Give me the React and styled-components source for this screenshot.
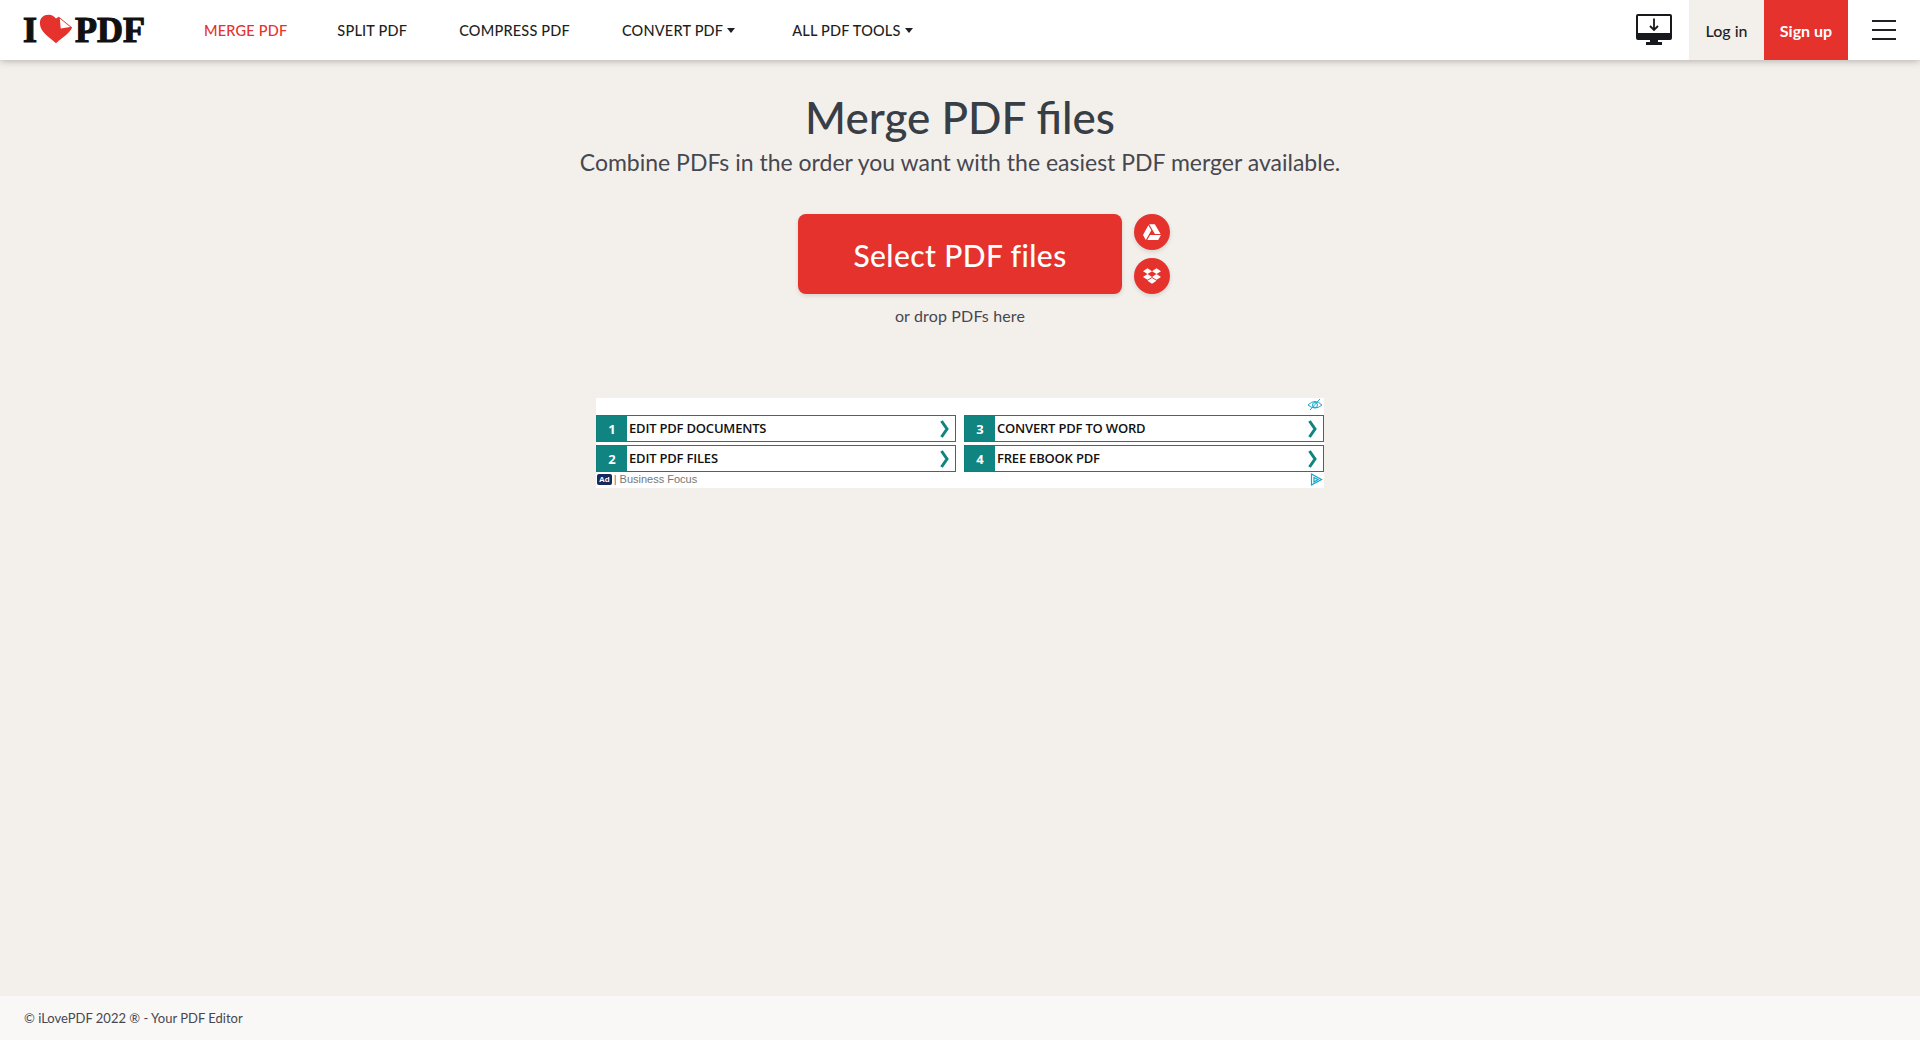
import styled, { createGlobalStyle } from "styled-components";
import { FaGoogleDrive, FaDropbox } from "react-icons/fa";

const Global = createGlobalStyle`
  * { box-sizing: border-box; }
  html, body { margin: 0; height: 100%; }
  body { background: #f3f0ec; font-family: Lato, "Open Sans", sans-serif; color: #383e45; }
`;

const Page = styled.div`
  height: 1040px;
  display: flex;
  flex-direction: column;
  overflow: hidden;
`;

const Head = styled.header`
  height: 60px;
  flex: none;
  background: #fff;
  display: flex;
  align-items: stretch;
  box-shadow: 0 0 8px rgba(0, 0, 0, 0.35);
  z-index: 5;
`;

const Logo = styled.a`
  display: flex;
  align-items: center;
  padding-left: 23px;
  width: 178px;
  font-family: "Liberation Serif", serif;
  font-weight: 700;
  font-size: 36px;
  line-height: 1;
  color: #111;
  -webkit-text-stroke: 1.2px #111;
`;

const Heart = styled.svg`
  width: 36px;
  height: 32px;
  margin: 0 1px 3px 1px;
  flex: none;
`;

const Nav = styled.nav`
  display: flex;
  align-items: center;
  flex: 1;
`;

const NavItem = styled.a`
  display: flex;
  align-items: center;
  gap: 4px;
  font-size: 14.5px;
  font-weight: 500;
  letter-spacing: 0.2px;
  padding: 0 26px;
  margin-right: ${(p) => p.$extra || 0}px;
  color: ${(p) => (p.$active ? "#e5322d" : "#1f1f24")};
  white-space: nowrap;
`;

const Caret = styled.span`
  width: 0;
  height: 0;
  border-left: 4.5px solid transparent;
  border-right: 4.5px solid transparent;
  border-top: 5px solid #1f1f24;
`;

const Tools = styled.div`
  display: flex;
  align-items: stretch;
`;

const Desktop = styled.svg`
  width: 36px;
  height: 32px;
  align-self: center;
  margin-right: 17px;
`;

const Login = styled.a`
  width: 75px;
  background: #f3f0ec;
  display: flex;
  align-items: center;
  justify-content: center;
  font-size: 16px;
  font-weight: 500;
  color: #1f1f24;
`;

const Signup = styled(Login)`
  width: 84px;
  background: #e5322d;
  color: #fff;
  font-weight: 700;
`;

const Burger = styled.a`
  width: 72px;
  display: flex;
  flex-direction: column;
  align-items: center;
  justify-content: center;
  gap: 7px;

  span {
    width: 24px;
    height: 2px;
    background: #1f1f24;
  }
`;

const Main = styled.main`
  flex: 1;
  display: flex;
  flex-direction: column;
  align-items: center;
  padding-top: 29px;
`;

const Title = styled.h1`
  margin: 0;
  font-size: 44px;
  line-height: 56px;
  font-weight: 500;
  color: #383e45;
`;

const Subtitle = styled.h2`
  margin: 1px 0 0;
  font-size: 23px;
  line-height: 32px;
  font-weight: 400;
  color: #47474f;
`;

const Uploader = styled.div`
  display: grid;
  grid-template-columns: 1fr 324px 1fr;
  column-gap: 12px;
  width: 100%;
  margin-top: 36px;
`;

const SelectButton = styled.a`
  grid-column: 2;
  height: 80px;
  padding-top: 2px;
  border-radius: 8px;
  background: #e5322d;
  color: #fff;
  font-size: 30px;
  font-weight: 500;
  letter-spacing: 0.4px;
  display: flex;
  align-items: center;
  justify-content: center;
  box-shadow: 0 2px 4px rgba(0, 0, 0, 0.12);
`;

const Clouds = styled.div`
  display: flex;
  flex-direction: column;
  gap: 8px;
`;

const Cloud = styled.a`
  width: 36px;
  height: 36px;
  border-radius: 50%;
  background: #e5322d;
  color: #fff;
  display: flex;
  align-items: center;
  justify-content: center;
  font-size: 18px;
  box-shadow: 0 2px 4px rgba(0, 0, 0, 0.12);
`;

const DropHint = styled.p`
  margin: 12px 0 0;
  font-size: 16px;
  line-height: 20px;
  letter-spacing: 0.15px;
  color: #47474f;
`;

const Ad = styled.div`
  width: 728px;
  height: 90px;
  margin-top: 72px;
  background: #fff;
  display: flex;
  flex-direction: column;
  font-family: "Open Sans", sans-serif;
`;

const AdTop = styled.div`
  height: 17px;
  display: flex;
  justify-content: flex-end;
  align-items: flex-start;
  padding-right: 1px;
`;

const AdGrid = styled.div`
  display: grid;
  grid-template-columns: 360px 360px;
  grid-auto-rows: 27px;
  column-gap: 8px;
  row-gap: 3px;
`;

const AdRow = styled.a`
  display: flex;
  align-items: center;
  border: 1px solid #0f7f7b;
`;

const AdNum = styled.span`
  width: 30px;
  align-self: stretch;
  background: #0f8480;
  color: #fff;
  font-size: 13px;
  font-weight: 700;
  display: flex;
  align-items: center;
  justify-content: center;
`;

const AdLabel = styled.span`
  flex: 1;
  padding: 0 0 1px 2px;
  font-size: 13px;
  font-weight: 600;
  letter-spacing: -0.2px;
  color: #111;
`;

const Chevron = styled.svg`
  width: 11px;
  height: 18px;
  margin-right: 5px;
`;

const AdFoot = styled.div`
  flex: 1;
  display: flex;
  align-items: center;
  padding: 0 1px 2px;
  font-family: "Liberation Sans", sans-serif;
  font-size: 11px;
  color: #777;
`;

const AdBadge = styled.span`
  background: #16295e;
  color: #fff;
  font-size: 8px;
  font-weight: 700;
  line-height: 11px;
  padding: 0 2px;
  border-radius: 2px;
  margin-right: 2px;
`;

const AdSource = styled.span`
  flex: 1;
`;

const Foot = styled.footer`
  height: 44px;
  flex: none;
  background: #f9f8f6;
  display: flex;
  align-items: center;
  padding-left: 24px;
  font-size: 13px;
  color: #47474f;
`;

const HeartLogo = () => (
  <Heart viewBox="0 0 38 32">
    <path d="M19 31 C12 25 2 19 2 10 C2 4 6 1 11 1 C15 1 17.500 3 19 5 L22 3 L36 14.500 C34 20 26 25 19 31 Z" fill="#e5322d" />
    <path d="M23 5 L34 14 L24 15.500 Z" fill="#fff" />
  </Heart>
);

const DesktopIcon = () => (
  <Desktop viewBox="0 0 36 32">
    <path d="M2 0 H34 A2 2 0 0 1 36 2 V24 A2 2 0 0 1 34 26 H22 V28 H26 V31 H10 V28 H14 V26 H2 A2 2 0 0 1 0 24 V2 A2 2 0 0 1 2 0 Z" fill="#17191c" />
    <rect x="2" y="2" width="32" height="17" fill="#fff" />
    <path d="M18 4.500 V16 M14 12 L18 16 L22 12" fill="none" stroke="#17191c" strokeWidth="1.800" />
  </Desktop>
);

const ChevronIcon = () => (
  <Chevron viewBox="0 0 11 18">
    <path d="M2.500 1 L8 9 L2.500 17" fill="none" stroke="#0f8480" strokeWidth="3" />
  </Chevron>
);

const HiddenEye = () => (
  <svg width="16" height="14" viewBox="0 0 16 14">
    <path d="M1 7 Q8 0 15 7 Q8 13 1 7 Z" fill="none" stroke="#18a5c9" strokeWidth="1" />
    <circle cx="8" cy="7" r="2.500" fill="none" stroke="#18a5c9" strokeWidth="1" />
    <path d="M3 12 L13 1" stroke="#18a5c9" strokeWidth="1" />
  </svg>
);

const AdChoice = () => (
  <svg width="13" height="13" viewBox="0 0 13 13">
    <path d="M1.500 1 L11.500 6.500 L1.500 12 Z M4 4.500 L8 6.500 L4 9 Z" fill="none" stroke="#18a5c9" strokeWidth="1.200" />
  </svg>
);

const adItems = [
  ["1", "EDIT PDF DOCUMENTS"],
  ["3", "CONVERT PDF TO WORD"],
  ["2", "EDIT PDF FILES"],
  ["4", "FREE EBOOK PDF"],
];

const App = () => {
  return (
    <Page>
      <Global />
      <Head>
        <Logo>
          I<HeartLogo />PDF
        </Logo>
        <Nav>
          <NavItem $active $extra={-2}>MERGE PDF</NavItem>
          <NavItem>SPLIT PDF</NavItem>
          <NavItem>COMPRESS PDF</NavItem>
          <NavItem $extra={5}>CONVERT PDF <Caret /></NavItem>
          <NavItem>ALL PDF TOOLS <Caret /></NavItem>
        </Nav>
        <Tools>
          <DesktopIcon />
          <Login>Log in</Login>
          <Signup>Sign up</Signup>
          <Burger>
            <span />
            <span />
            <span />
          </Burger>
        </Tools>
      </Head>
      <Main>
        <Title>Merge PDF files</Title>
        <Subtitle>Combine PDFs in the order you want with the easiest PDF merger available.</Subtitle>
        <Uploader>
          <SelectButton>Select PDF files</SelectButton>
          <Clouds>
            <Cloud><FaGoogleDrive /></Cloud>
            <Cloud><FaDropbox /></Cloud>
          </Clouds>
        </Uploader>
        <DropHint>or drop PDFs here</DropHint>
        <Ad>
          <AdTop><HiddenEye /></AdTop>
          <AdGrid>
            {adItems.map(([num, label]) => (
              <AdRow key={num}>
                <AdNum>{num}</AdNum>
                <AdLabel>{label}</AdLabel>
                <ChevronIcon />
              </AdRow>
            ))}
          </AdGrid>
          <AdFoot>
            <AdBadge>Ad</AdBadge>
            <AdSource>| Business Focus</AdSource>
            <AdChoice />
          </AdFoot>
        </Ad>
      </Main>
      <Foot>© iLovePDF 2022 ® - Your PDF Editor</Foot>
    </Page>
  );
};

export default App;
